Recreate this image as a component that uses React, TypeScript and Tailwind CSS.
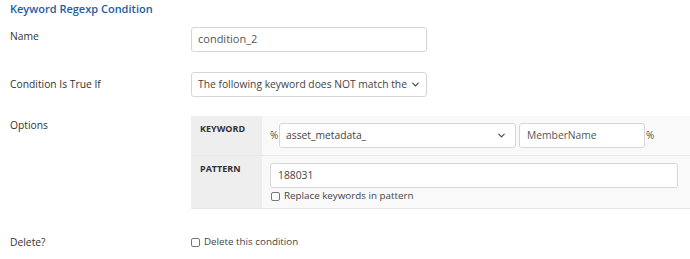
import { ChevronDown } from "lucide-react";

const Label = ({ children }: { children: React.ReactNode }) => (
  <div className="w-[190px] shrink-0 pl-[10px] text-[10.3px] text-[#333]">{children}</div>
);

const Check = () => (
  <span className="inline-block h-[9px] w-[9px] shrink-0 rounded-[2px] border border-[#777] bg-white" />
);

const App = () => {
  return (
    <div className="h-[259px] w-[690px] overflow-hidden bg-white font-['Open_Sans',sans-serif] text-[#333]">
      <div className="pl-[10px] pt-[1px] text-[11px] font-semibold leading-[16px] text-[#1d5c9c]">
        Keyword Regexp Condition
      </div>

      <div className="mt-[10px] flex items-start">
        <Label>
          <div className="leading-[18px]">Name</div>
        </Label>
        <div className="ml-[1px] flex h-[25px] w-[236px] items-center rounded-[3px] border border-[#d6d6d6] px-[6px] text-[11px] text-[#555]">
          condition_2
        </div>
      </div>

      <div className="mt-[20px] flex items-center">
        <Label>Condition Is True If</Label>
        <div className="ml-[1px] flex h-[25px] w-[236px] items-center rounded-[3px] border border-[#d6d6d6] pl-[6px] pr-[5px] text-[10.3px] text-[#444]">
          <span className="flex-1 overflow-hidden whitespace-nowrap">
            The following keyword does NOT match the specified pattern
          </span>
          <ChevronDown className="ml-[1px] h-[11px] w-[11px] shrink-0 text-[#444]" strokeWidth={2.5} />
        </div>
      </div>

      <div className="mt-[19px] flex items-start">
        <Label>
          <div className="leading-[18px]">Options</div>
        </Label>
        <div className="ml-[1px] flex-1 border-b border-[#e8e8e8] text-[10.3px]">
          <div className="flex border-b border-[#e8e8e8]">
            <div className="w-[71px] shrink-0 bg-[#eeeeee] pl-[9px] pt-[6px] text-[9px] font-bold text-[#333]">
              KEYWORD
            </div>
            <div className="flex flex-1 items-center bg-[#f9f9f9] py-[7px] pl-[8px]">
              <span className="w-[9px] text-[10px] text-[#555]">%</span>
              <div className="flex h-[25px] w-[237px] items-center rounded-[3px] border border-[#d6d6d6] bg-white pl-[6px] pr-[8px] text-[#444]">
                <span className="flex-1">asset_metadata_</span>
                <ChevronDown className="h-[11px] w-[11px] text-[#444]" strokeWidth={2.5} />
              </div>
              <div className="ml-[3px] flex h-[25px] w-[126px] items-center rounded-[3px] border border-[#d6d6d6] bg-white px-[7px] text-[#555]">
                MemberName
              </div>
              <span className="ml-[1px] text-[10px] text-[#555]">%</span>
            </div>
          </div>
          <div className="flex">
            <div className="w-[71px] shrink-0 bg-[#eeeeee] pl-[9px] pt-[6px] text-[9px] font-bold text-[#333]">
              PATTERN
            </div>
            <div className="flex-1 bg-[#f9f9f9] pb-[5px] pl-[8px] pt-[7px]">
              <div className="flex h-[25px] w-[408px] items-center rounded-[3px] border border-[#d6d6d6] bg-white px-[7px] text-[#444]">
                188031
              </div>
              <label className="mt-[1px] flex items-center gap-[4px] pl-[1px] text-[9.8px] leading-[14px] text-[#444]">
                <Check />
                Replace keywords in pattern
              </label>
            </div>
          </div>
        </div>
      </div>

      <div className="mt-[26px] flex items-center">
        <Label>Delete?</Label>
        <label className="ml-[1px] flex items-center gap-[4px] text-[9.8px] text-[#444]">
          <Check />
          Delete this condition
        </label>
      </div>
    </div>
  );
};

export default App;
